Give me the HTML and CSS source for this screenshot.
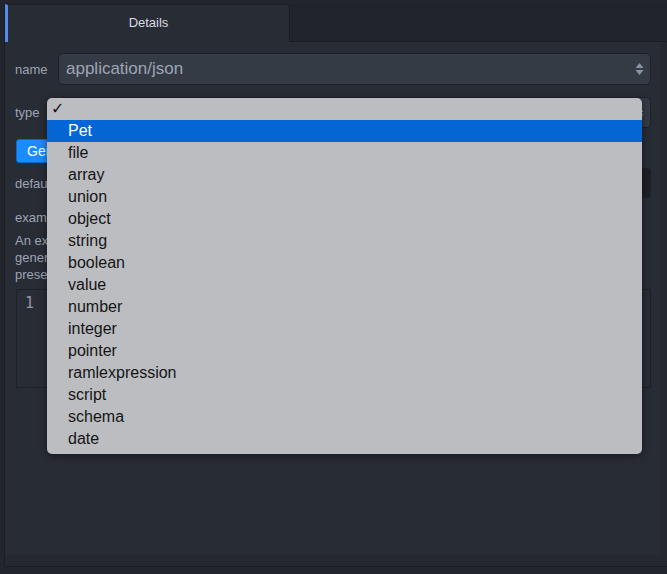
FILE: index.html
```html
<!DOCTYPE html>
<html>
<head>
<meta charset="utf-8">
<link rel="stylesheet" href="styles.css">
</head>
<body>
<div class="app">
  <div class="tabs">
    <div class="tab active">Details</div>
    <div class="tab-fill"></div>
  </div>
  <div class="body">
    <div class="panel">
      <div class="row">
        <label class="lbl">name</label>
        <div class="select">
          <span class="value">application/json</span>
          <svg class="arrows" width="9" height="14" viewBox="0 0 9 14"><path d="M4.5 1 L8.5 6 H0.5 Z M4.5 13 L8.5 8 H0.5 Z" fill="#8a91a0"/></svg>
        </div>
      </div>
      <div class="row">
        <label class="lbl">type</label>
        <div class="select short">
          <span class="value">Pet</span>
          <svg class="arrows" width="9" height="14" viewBox="0 0 9 14"><path d="M4.5 1 L8.5 6 H0.5 Z M4.5 13 L8.5 8 H0.5 Z" fill="#8a91a0"/></svg>
        </div>
      </div>
      <div class="btn-row"><button class="btn">Generate</button></div>
      <div class="row last">
        <label class="lbl">default</label>
        <div class="input"></div>
      </div>
      <div class="lbl block">example</div>
      <p class="desc">An example value for the type. This can be<br>generated from the schema, or written in the<br>presence of the editor below.</p>
      <div class="editor">
        <div class="gutter">1</div>
        <div class="code"></div>
      </div>
    </div>
    <div class="scroll"></div>
  </div>
  <div class="footer"></div>

  <div class="menu">
    <div class="item check"><span class="tick">✓</span></div>
    <div class="item sel">Pet</div>
    <div class="item">file</div>
    <div class="item">array</div>
    <div class="item">union</div>
    <div class="item">object</div>
    <div class="item">string</div>
    <div class="item">boolean</div>
    <div class="item">value</div>
    <div class="item">number</div>
    <div class="item">integer</div>
    <div class="item">pointer</div>
    <div class="item">ramlexpression</div>
    <div class="item">script</div>
    <div class="item">schema</div>
    <div class="item">date</div>
  </div>
</div>
</body>
</html>
```

FILE: styles.css
```css
* { box-sizing: border-box; }
html, body {
  margin: 0;
  padding: 0;
  background: #22252c;
  font-family: "Liberation Sans", Arial, sans-serif;
}
.app {
  position: relative;
  width: 667px;
  height: 574px;
  overflow: hidden;
  padding-left: 4px;
  display: flex;
  flex-direction: column;
}
.app::before {
  content: "";
  position: absolute;
  left: 4px;
  top: 4px;
  bottom: 7px;
  width: 1px;
  background: #1b1d22;
}
.tabs {
  display: flex;
  height: 42px;
  padding-top: 4px;
  margin-left: 1px;
}
.tab {
  width: 285px;
  height: 38px;
  background: #282c35;
  border-left: 3px solid #568af2;
  border-right: 1px solid #1b1d22;
  border-top: 1px solid #1b1d22;
  border-top-right-radius: 3px;
  color: #d7dae0;
  font-size: 13px;
  display: flex;
  align-items: center;
  justify-content: center;
  padding-bottom: 2px;
}
.tab-fill {
  flex: 1;
  border-bottom: 1px solid #1b1d22;
  background: #21242b;
}
.body {
  display: flex;
  height: 513px;
  margin-left: 1px;
}
.panel {
  flex: 1;
  background: #282c35;
  padding: 11px 9px 0 10px;
  display: flex;
  flex-direction: column;
}
.scroll {
  width: 7px;
  background: #252830;
}
.footer {
  height: 12px;
  margin-left: 1px;
  background: #252830;
  border-bottom: 1px solid #1b1d22;
}
.row {
  display: flex;
  align-items: center;
  margin-bottom: 12px;
}
.lbl {
  width: 43px;
  color: #9da5b4;
  font-size: 13px;
}
.lbl.block { width: auto; margin-top: 0; }
.select {
  flex: 1;
  height: 32px;
  background: #353b45;
  border: 1px solid #1e2127;
  border-radius: 5px;
  display: flex;
  align-items: center;
  justify-content: space-between;
  padding: 0 6px 0 7px;
}
.select.short { height: 31px; }
.value {
  color: #9da5b4;
  font-size: 17px;
}
.arrows { display: block; }
.btn-row { margin-bottom: 5px; margin-top: -1px; }
.btn {
  margin-left: 1px;
  height: 24px;
  background: #1a8cff;
  border: 1px solid #0a6ad0;
  border-radius: 3px;
  color: #fff;
  font-family: "Liberation Sans", Arial, sans-serif;
  font-size: 14px;
  padding: 0 10px;
}
.input {
  flex: 1;
  height: 30px;
  background: #1e2025;
  border-radius: 4px;
  margin-left: 80px;
}
.desc {
  margin: 7px 0 6px 0;
  color: #9da5b4;
  font-size: 13px;
  line-height: 17px;
}
.editor {
  margin-left: 1px;
  height: 99px;
  border: 1px solid #1e2127;
  display: flex;
  background: #282c35;
}
.gutter {
  width: 30px;
  padding: 4px 0 0 8px;
  font-family: "DejaVu Sans Mono", monospace;
  color: #9098a6;
  font-size: 15px;
}
.code { flex: 1; }
.menu {
  position: absolute;
  left: 47px;
  top: 98px;
  width: 595px;
  height: 356px;
  background: #bcbdc1;
  border-radius: 5px;
  box-shadow: 0 2px 8px rgba(0, 0, 0, 0.45);
  overflow: hidden;
}
.item {
  height: 22px;
  line-height: 21px;
  padding-left: 21px;
  color: #151515;
  font-size: 16px;
  font-family: "Liberation Sans", Arial, sans-serif;
}
.item.check { padding-left: 4px; }
.tick { font-family: "DejaVu Sans", sans-serif; font-size: 16px; font-weight: bold; }
.item.sel {
  background: #0466d5;
  color: #fff;
}
```
